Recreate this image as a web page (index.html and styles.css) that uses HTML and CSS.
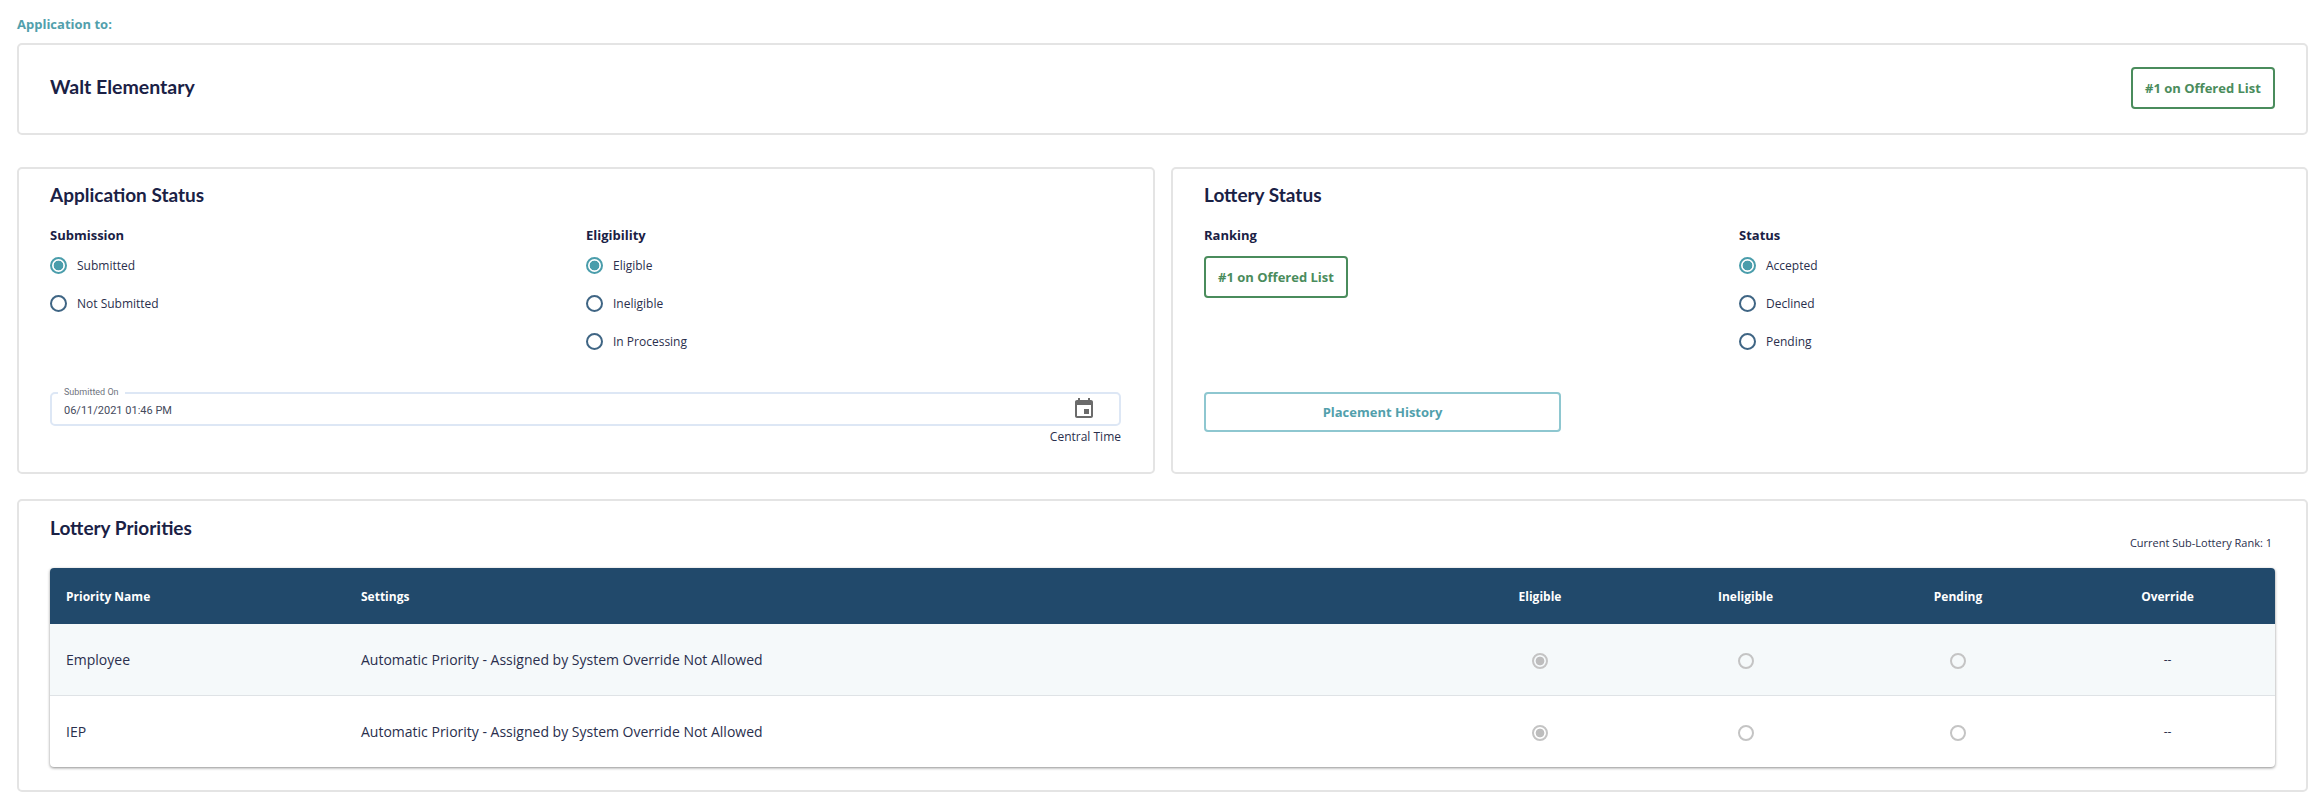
FILE: index.html
```html
<!DOCTYPE html>
<html lang="en">
<head>
<meta charset="utf-8">
<title>Application</title>
<link rel="stylesheet" href="styles.css">
</head>
<body>
<main class="page">
  <div class="eyebrow">Application to:</div>
  <section class="card school">
    <h2 class="school-name">Walt Elementary</h2>
    <span class="badge">#1 on Offered List</span>
  </section>

  <div class="status-row">
    <section class="card status-card app-card">
      <h2 class="title">Application Status</h2>
      <div class="cols">
        <div class="col">
          <h3 class="sub">Submission</h3>
          <div class="opt"><span class="radio on"></span>Submitted</div>
          <div class="opt"><span class="radio"></span>Not Submitted</div>
        </div>
        <div class="col">
          <h3 class="sub">Eligibility</h3>
          <div class="opt"><span class="radio on"></span>Eligible</div>
          <div class="opt"><span class="radio"></span>Ineligible</div>
          <div class="opt"><span class="radio"></span>In Processing</div>
        </div>
      </div>
      <div class="field">
        <span class="field-label">Submitted On</span>
        <span class="field-value">06/11/2021 01:46 PM</span>
        <svg class="cal" viewBox="0 0 24 24" width="24" height="24"><path d="M17 12h-5v5h5v-5zM16 1v2H8V1H6v2H5c-1.11 0-1.99.9-1.99 2L3 19c0 1.1.89 2 2 2h14c1.1 0 2-.9 2-2V5c0-1.1-.9-2-2-2h-1V1h-2zm3 18H5V8h14v11z"/></svg>
      </div>
      <div class="tz">Central Time</div>
    </section>

    <section class="card status-card lot-card">
      <h2 class="title">Lottery Status</h2>
      <div class="cols">
        <div class="col lot-left">
          <h3 class="sub">Ranking</h3>
          <span class="badge">#1 on Offered List</span>
          <button class="history" type="button">Placement History</button>
        </div>
        <div class="col">
          <h3 class="sub">Status</h3>
          <div class="opt"><span class="radio on"></span>Accepted</div>
          <div class="opt"><span class="radio"></span>Declined</div>
          <div class="opt"><span class="radio"></span>Pending</div>
        </div>
      </div>
    </section>
  </div>

  <section class="card priorities">
    <div class="pri-head">
      <h2 class="title">Lottery Priorities</h2>
      <span class="rank">Current Sub-Lottery Rank: 1</span>
    </div>
    <div class="table-wrap">
      <table class="table">
        <colgroup>
          <col class="c-name"><col class="c-set"><col class="c-el"><col class="c-in"><col class="c-pe"><col class="c-ov">
        </colgroup>
        <thead>
          <tr>
            <th>Priority Name</th><th>Settings</th>
            <th class="mid">Eligible</th><th class="mid">Ineligible</th><th class="mid">Pending</th><th class="mid">Override</th>
          </tr>
        </thead>
        <tbody>
          <tr class="alt">
            <td>Employee</td><td>Automatic Priority - Assigned by System Override Not Allowed</td>
            <td class="mid"><span class="dis on"></span></td><td class="mid"><span class="dis"></span></td><td class="mid"><span class="dis"></span></td><td class="mid dash">--</td>
          </tr>
          <tr>
            <td>IEP</td><td>Automatic Priority - Assigned by System Override Not Allowed</td>
            <td class="mid"><span class="dis on"></span></td><td class="mid"><span class="dis"></span></td><td class="mid"><span class="dis"></span></td><td class="mid dash">--</td>
          </tr>
        </tbody>
      </table>
    </div>
  </section>
</main>
</body>
</html>
```
FILE: styles.css
```css
* { box-sizing: border-box; }
html, body { margin: 0; padding: 0; background: #fff; }
body { font-family: "Open Sans", "Liberation Sans", sans-serif; color: #1c2340; }
.page { width: 2323px; height: 801px; padding: 15px 15px 0 17px; overflow: hidden; }
.eyebrow { height: 28px; line-height: 18px; font-size: 13px; font-weight: 700; color: #529fac; }
.card { background: #fff; border: 2px solid #e4e4e4; border-radius: 5px; }
.school { height: 92px; display: flex; align-items: center; justify-content: space-between; padding: 0 31px 2px 31px; margin-bottom: 32px; }
.school-name, .title { margin: 0; font-family: Lato, "Open Sans", sans-serif; font-weight: 700; font-size: 19px; color: #1a2145; }
.school-name { position: relative; top: -2px; font-size: 19.5px; }
.badge { display: inline-flex; align-items: center; justify-content: center; width: 144px; height: 42px; border: 2px solid #4a8c5c; border-radius: 4px; font-size: 13px; font-weight: 700; color: #4a8c5c; background: #fff; }
.status-row { display: flex; gap: 16px; height: 307px; margin-bottom: 25px; }
.status-card { padding: 13px 31px 0; height: 307px; }
.app-card { width: 1138px; }
.lot-card { width: 1137px; padding-left: 31px; }
.title { line-height: 25px; }
.cols { display: flex; margin-top: 19px; }
.app-card .cols { height: 166px; }
.lot-card .cols { height: 257px; }
.col { width: 536px; }
.lot-left { width: 535px; display: flex; flex-direction: column; align-items: flex-start; }
.sub { margin: 0 0 2px; font-size: 13px; line-height: 18px; font-weight: 700; color: #1a2145; }
.lot-left .sub { margin-bottom: 12px; }
.opt { display: flex; align-items: center; height: 38px; margin-top: 0; font-size: 12px; color: #2a2f4d; }
.radio { width: 17px; height: 17px; margin-right: 10px; border: 2px solid #3f6584; border-radius: 50%; background: #fff; flex: none; }
.radio.on { border-color: #4a9dab; background: radial-gradient(circle, #4a9dab 0 4.5px, #fff 5.2px); }
.field { position: relative; display: flex; align-items: center; justify-content: space-between; width: 1071px; height: 34px; padding: 0 23px 0 12px; border: 2px solid #dde7f5; border-radius: 5px; }
.field-label { position: absolute; left: 6px; top: -7px; padding: 0 6px; background: #fff; font-family: Roboto, sans-serif; font-size: 9px; line-height: 10px; color: #6f7480; }
.field-value { font-family: Roboto, sans-serif; font-size: 11px; color: #454a5c; position: relative; top: 1px; }
.cal { fill: #6b6b6b; flex: none; }
.tz { margin-top: 2px; text-align: right; width: 1071px; font-size: 12px; line-height: 17px; color: #2a2f4d; }
.history { margin-top: 94px; width: 357px; height: 40px; border: 2px solid #8ec7d0; border-radius: 4px; background: #fff; font-family: "Open Sans", sans-serif; font-size: 13px; font-weight: 700; color: #529fac; }
.priorities { height: 293px; padding: 0 31px; }
.pri-head { position: relative; height: 67px; padding-top: 14px; }
.rank { position: absolute; right: 3px; top: 34px; font-size: 11px; line-height: 16px; color: #2a2f4d; }
.table-wrap { width: 2225px; border-radius: 4px; box-shadow: 0 1px 3px rgba(0,0,0,.45); overflow: hidden; }
.table { width: 2225px; table-layout: fixed; border-collapse: collapse; font-size: 14px; color: #2a2f4d; }
.c-name { width: 295px; } .c-set { width: 1100px; } .c-el { width: 190px; } .c-in { width: 221px; } .c-pe { width: 204px; } .c-ov { width: 215px; }
th, td { padding: 0 16px; text-align: left; }
th { height: 56px; background: #21496b; color: #fff; font-size: 12px; font-weight: 700; }
td { height: 71px; border-bottom: 1px solid #dfe3e6; }
tbody tr:last-child td { border-bottom: 0; height: 72px; }
.alt td { background: #f5f9fa; }
th.mid, td.mid { text-align: center; }
.dash { font-size: 12px; }
.dis { display: inline-block; vertical-align: middle; width: 16px; height: 16px; border: 2px solid #c4c4c4; border-radius: 50%; background: transparent; }
.dis.on { background: radial-gradient(circle, #bdbdbd 0 4px, transparent 4.7px); }
```
